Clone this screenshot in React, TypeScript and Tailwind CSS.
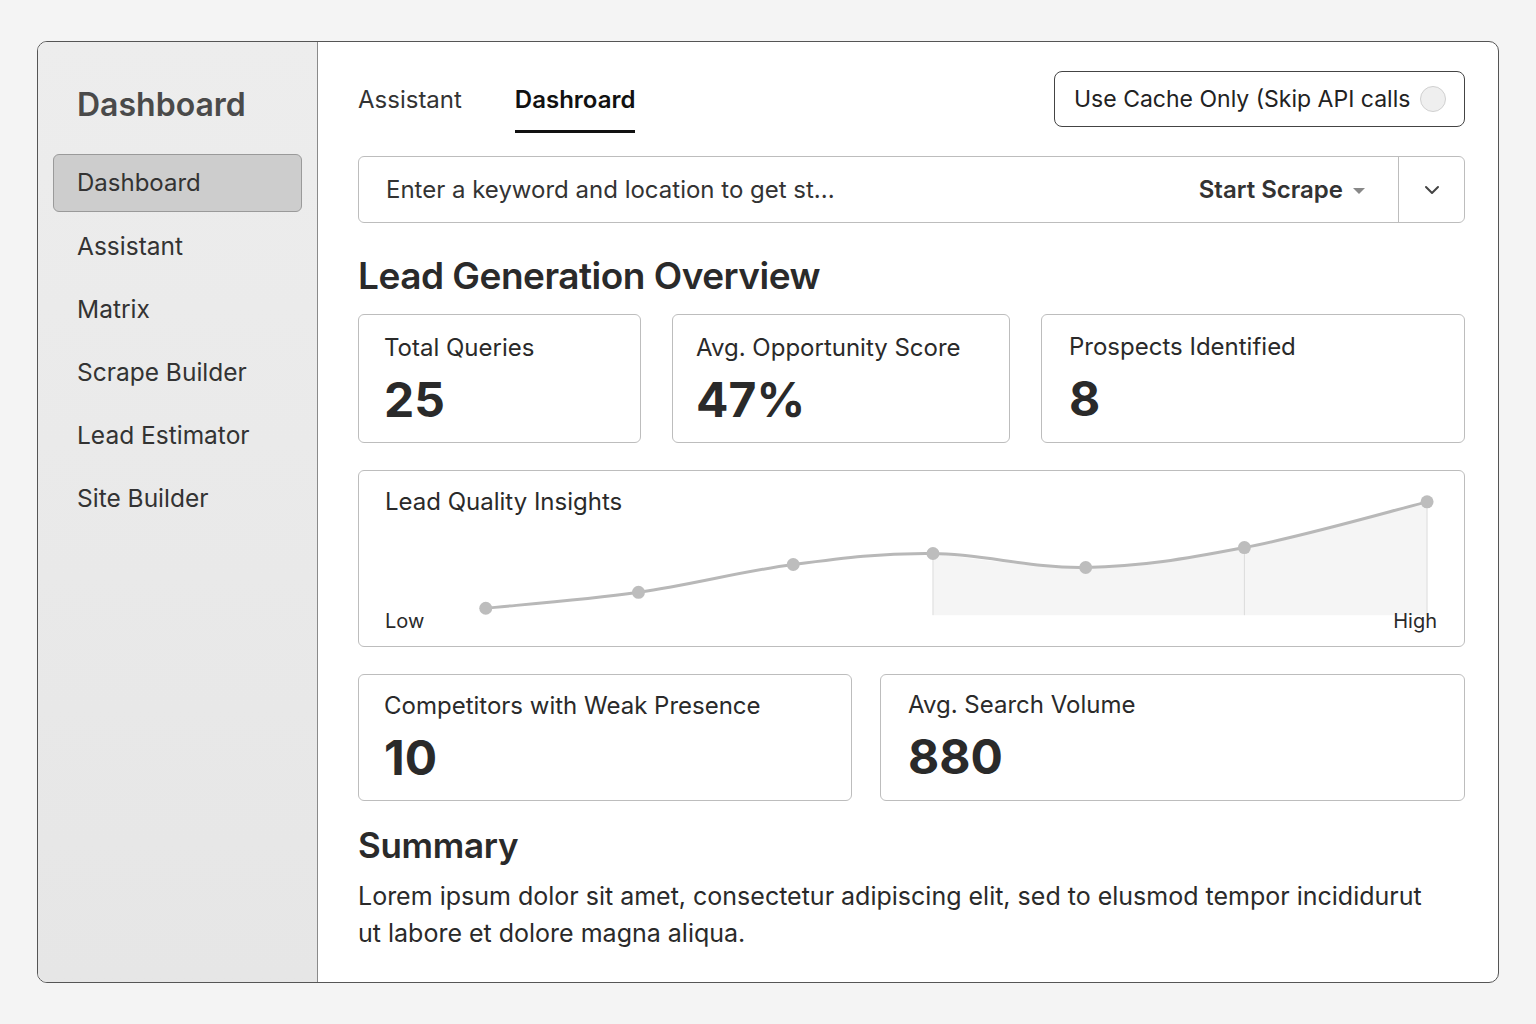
import React from "react";

const pts: [number, number][] = [
  [127, 138],
  [280, 122],
  [435, 94],
  [575, 83],
  [728, 97],
  [887, 77],
  [1070, 31],
];

function smoothPath(p: [number, number][]) {
  let d = `M ${p[0][0]} ${p[0][1]}`;
  for (let i = 0; i < p.length - 1; i++) {
    const p0 = p[i - 1] || p[i];
    const p1 = p[i];
    const p2 = p[i + 1];
    const p3 = p[i + 2] || p2;
    const t = 0.18;
    const c1x = p1[0] + (p2[0] - p0[0]) * t;
    const c1y = p1[1] + (p2[1] - p0[1]) * t;
    const c2x = p2[0] - (p3[0] - p1[0]) * t;
    const c2y = p2[1] - (p3[1] - p1[1]) * t;
    d += ` C ${c1x} ${c1y}, ${c2x} ${c2y}, ${p2[0]} ${p2[1]}`;
  }
  return d;
}

function areaPath(p: [number, number][], base: number) {
  const sub = p.slice(3);
  const line = smoothPath(sub);
  return `${line} L ${sub[sub.length - 1][0]} ${base} L ${sub[0][0]} ${base} Z`;
}

function Chart() {
  const line = smoothPath(pts);
  return (
    <svg
      className="absolute inset-0 h-full w-full"
      viewBox="0 0 1107 176"
      preserveAspectRatio="none"
    >
      <path d={areaPath(pts, 145)} fill="#f5f5f5" />
      {[575, 887, 1070].map((x) => (
        <line key={x} x1={x} x2={x} y1={x === 1070 ? 31 : x === 575 ? 83 : 77} y2={145} stroke="#dcdcdc" strokeWidth={1} />
      ))}
      <path d={line} fill="none" stroke="#b8b8b8" strokeWidth={3} strokeLinecap="round" />
      {pts.map(([x, y]) => (
        <circle key={x} cx={x} cy={y} r={6.5} fill="#bdbdbd" />
      ))}
    </svg>
  );
}

function StatCard({ label, value, className }: { label: string; value: string; className: string }) {
  return (
    <div className={`rounded-[6px] border border-[#bdbdbd] bg-white ${className}`}>
      <div className="text-[24px] leading-[30px] text-[#2a2a2a]">{label}</div>
      <div className="mt-[9px] text-[48px] font-bold leading-[56px] text-[#2a2a2a]">{value}</div>
    </div>
  );
}

export default function App() {
  const nav = ["Assistant", "Matrix", "Scrape Builder", "Lead Estimator", "Site Builder"];
  return (
    <div
      className="flex h-[1024px] w-[1536px] bg-[#f4f4f4] pl-[37px] pt-[41px]"
      style={{ fontFamily: "Inter, 'Noto Sans', sans-serif" }}
    >
      <div className="flex h-[942px] w-[1462px] overflow-hidden rounded-[10px] border border-[#555] bg-white">
        {/* Sidebar */}
        <aside className="flex w-[280px] shrink-0 flex-col border-r border-[#8a8a8a] bg-gradient-to-b from-[#ededed] to-[#e6e6e6] px-[15px] pt-[41px]">
          <div className="pl-[24px] text-[32px] font-semibold leading-[44px] text-[#4a4a4a]">Dashboard</div>
          <div className="mt-[27px] flex h-[58px] items-center rounded-[6px] border border-[#9a9a9a] bg-[#cdcdcd] pl-[23px] text-[24px] text-[#333]">
            Dashboard
          </div>
          <div className="mt-[3px] flex flex-col">
            {nav.map((n) => (
              <div key={n} className="flex h-[63px] items-center pl-[24px] text-[24.5px] text-[#333]">
                {n}
              </div>
            ))}
          </div>
        </aside>

        {/* Main */}
        <main className="flex flex-1 flex-col pl-[40px] pr-[33px] pt-[29px] text-[#2a2a2a]">
          <div className="flex items-start justify-between">
            <div className="flex gap-[53px] pt-[13px]">
              <div className="pb-[17px] text-[24px] leading-[32px] text-[#333]">Assistant</div>
              <div className="border-b-[3px] border-[#111] pb-[14px] text-[24px] font-semibold leading-[32px] text-[#111]">
                Dashroard
              </div>
            </div>
            <div className="flex h-[56px] w-[411px] items-center justify-between rounded-[8px] border border-[#444] pl-[19px] pr-[18px]">
              <span className="text-[23px] text-[#222]">Use Cache Only (Skip API calls</span>
              <span className="h-[26px] w-[26px] rounded-full border border-[#d0d0d0] bg-[#efefef]" />
            </div>
          </div>

          <div className="mt-[23px] flex h-[67px] items-stretch rounded-[6px] border border-[#bdbdbd]">
            <div className="flex flex-1 items-center pl-[27px] text-[24px] text-[#333]">
              Enter a keyword and location to get st...
            </div>
            <div className="flex items-center pr-[32px]">
              <span className="text-[24px] font-semibold text-[#333]">Start Scrape</span>
              <svg width="14" height="8" viewBox="0 0 14 8" className="ml-[9px] mt-[2px]">
                <path d="M1 1 L13 1 L7 7 Z" fill="#888" />
              </svg>
            </div>
            <div className="flex w-[66px] items-center justify-center border-l border-[#bdbdbd]">
              <svg width="16" height="10" viewBox="0 0 16 10">
                <path d="M2 2 L8 8 L14 2" fill="none" stroke="#444" strokeWidth="2" strokeLinecap="round" strokeLinejoin="round" />
              </svg>
            </div>
          </div>

          <h1 className="mt-[31px] text-[37px] font-semibold leading-[44px] tracking-[-0.5px] text-[#2a2a2a]">
            Lead Generation Overview
          </h1>

          <div className="mt-[16px] flex gap-[31px]">
            <StatCard label="Total Queries" value="25" className="h-[129px] w-[283px] pl-[25px] pt-[18px]" />
            <StatCard label="Avg. Opportunity Score" value="47%" className="h-[129px] w-[338px] pl-[23px] pt-[18px]" />
            <StatCard label="Prospects Identified" value="8" className="h-[129px] flex-1 pl-[27px] pt-[17px]" />
          </div>

          <div className="relative mt-[27px] flex h-[177px] flex-col justify-between rounded-[6px] border border-[#bdbdbd] bg-white pb-[12px] pl-[26px] pr-[27px] pt-[15px]">
            <Chart />
            <div className="relative text-[24px] leading-[32px] text-[#2a2a2a]">Lead Quality Insights</div>
            <div className="relative flex justify-between text-[20px] leading-[26px] text-[#2a2a2a]">
              <span>Low</span>
              <span>High</span>
            </div>
          </div>

          <div className="mt-[27px] flex gap-[28px]">
            <StatCard label="Competitors with Weak Presence" value="10" className="h-[127px] w-[494px] pl-[25px] pt-[16px]" />
            <StatCard label="Avg. Search Volume" value="880" className="h-[127px] flex-1 pl-[27px] pt-[15px]" />
          </div>

          <h2 className="mt-[22px] text-[35px] font-semibold leading-[44px] tracking-[-0.3px] text-[#2a2a2a]">Summary</h2>
          <p className="mt-[11px] pr-[30px] text-[25px] leading-[37px] text-[#2a2a2a]">
            Lorem ipsum dolor sit amet, consectetur adipiscing elit, sed to elusmod tempor incididurut ut labore et dolore magna aliqua.
          </p>
        </main>
      </div>
    </div>
  );
}
